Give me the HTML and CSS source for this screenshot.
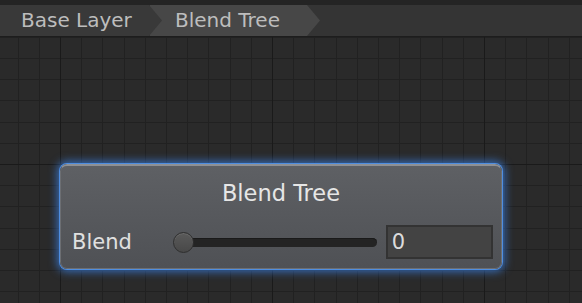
FILE: index.html
```html
<!DOCTYPE html>
<html>
<head>
<meta charset="utf-8">
<link rel="stylesheet" href="styles.css">
</head>
<body>
<div class="bar">
  <div class="crumb crumb-base">Base Layer</div>
  <div class="crumb crumb-current">Blend Tree</div>
</div>
<div class="canvas">
  <div class="node">
    <div class="node-title">Blend Tree</div>
    <div class="node-row">
      <span class="label">Blend</span>
      <div class="slider">
        <div class="track"></div>
        <div class="thumb"></div>
      </div>
      <div class="field">0</div>
    </div>
  </div>
</div>
</body>
</html>
```
FILE: styles.css
```css
html, body {
  margin: 0;
  padding: 0;
}
body {
  width: 582px;
  height: 303px;
  overflow: hidden;
  font-family: "DejaVu Sans", "Open Sans", sans-serif;
  background-color: #2a2a2a;
  background-image:
    linear-gradient(180deg, transparent 164px, #1a1a1a 164px, #1a1a1a 165px, transparent 165px),
    repeating-linear-gradient(90deg, transparent 0, transparent 60px, #1a1a1a 60px, #1a1a1a 61px, transparent 61px, transparent 212px),
    repeating-linear-gradient(90deg, transparent 0, transparent 17.6px, #212121 17.6px, #212121 18.6px, transparent 18.6px, transparent 21.2px),
    repeating-linear-gradient(180deg, transparent 0, transparent 15.6px, #212121 15.6px, #212121 16.6px, transparent 16.6px, transparent 21.2px);
}
.bar {
  display: flex;
  height: 31px;
  padding-top: 5px;
  background: linear-gradient(180deg, #242424 0, #242424 5px, #343434 5px);
  border-bottom: 1px solid #1d1d1d;
}
.crumb {
  height: 31px;
  line-height: 31px;
  font-size: 20px;
  color: #bdbdbd;
}
.crumb-base {
  position: relative;
  z-index: 2;
  width: 141px;
  padding-left: 21px;
  background: #393939;
  clip-path: polygon(0 0, 149px 0, 162px 50%, 149px 100%, 0 100%);
}
.crumb-current {
  margin-left: -12px;
  width: 145px;
  padding-left: 25px;
  background: #474747;
  clip-path: polygon(0 0, 157px 0, 170px 50%, 157px 100%, 0 100%);
}
.canvas {
  padding: 127px 0 0 60px;
}
.node {
  width: 440px;
  height: 102px;
  border: 1px solid #6c6e72;
  border-top: 2px solid #8e9094;
  border-radius: 7px;
  background: linear-gradient(180deg, #5e6064, #4f5155);
  box-shadow: 0 0 0 1px #4f8ee0, 0 0 9px 3px rgba(58, 122, 214, 0.8);
  display: flex;
  flex-direction: column;
}
.node-title {
  text-align: center;
  font-size: 22.5px;
  color: #e6e6e6;
  padding-top: 13px;
  height: 29px;
  line-height: 29px;
}
.node-row {
  display: flex;
  align-items: center;
  padding: 17px 8px 0 11px;
}
.label {
  font-size: 21px;
  color: #e0e0e0;
  width: 101px;
}
.slider {
  position: relative;
  width: 206px;
  height: 22px;
  margin-right: 9px;
}
.track {
  position: absolute;
  left: 8px;
  right: 0;
  top: 7px;
  height: 9px;
  border-radius: 5px;
  background: #242424;
  box-shadow: inset 0 1px 0 #1a1a1a;
}
.thumb {
  position: absolute;
  left: 1px;
  top: 1px;
  width: 19px;
  height: 19px;
  border-radius: 50%;
  background: linear-gradient(180deg, #5a5a5a, #484848);
  border: 1px solid #2e2e2e;
  box-shadow: inset 0 1px 0 #6a6a6a;
}
.field {
  width: 100px;
  height: 30px;
  line-height: 30px;
  padding-left: 4px;
  background: #434343;
  border: 2px solid #333333;
  font-size: 21px;
  color: #dcdcdc;
}
```
